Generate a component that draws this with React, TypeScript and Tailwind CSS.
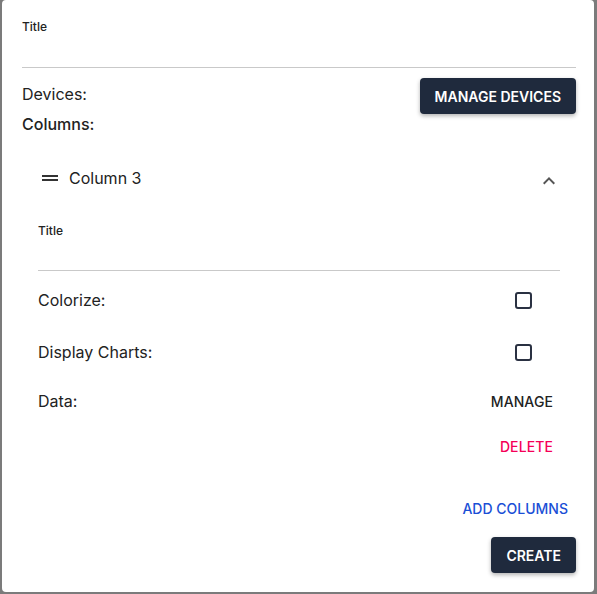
import React from 'react';

const DragHandle = () => (
  <svg width="24" height="24" viewBox="0 0 24 24" className="text-[#333]">
    <path fill="currentColor" d="M20 9H4v2h16V9zM4 15h16v-2H4v2z" />
  </svg>
);

const ChevronUp = () => (
  <svg width="24" height="24" viewBox="0 0 24 24" className="text-[#555]">
    <path fill="currentColor" d="M7.41 15.41 12 10.83l4.59 4.58L18 14l-6-6-6 6z" />
  </svg>
);

const Checkbox = () => (
  <div className="flex h-[24px] w-[24px] items-center justify-center">
    <div className="h-[17px] w-[17px] rounded-[3px] border-2 border-[#2a3142]" />
  </div>
);

export default function App() {
  return (
    <div className="h-[594px] w-[597px] bg-[#7b7b7b] pl-[2px] pr-[3px] pb-[2px] font-['Inter',sans-serif] text-[#222]">
      <div className="flex h-full w-full flex-col rounded-[4px] bg-white pl-[20px] pr-[18px] pt-[19px]">
        {/* Title field */}
        <div className="flex flex-col border-b-[1.5px] border-[#c9c9c9] pb-[32px]">
          <span className="text-[12px] leading-[16px] font-medium">Title</span>
        </div>

        <div className="mt-[10px] flex items-start justify-between">
          <span className="mt-[6px] text-[16px] leading-[20px]">Devices:</span>
          <button className="h-[36px] rounded-[4px] bg-[#1f2a3d] px-[15px] text-[14px] font-semibold text-white shadow-[0_2px_4px_rgba(0,0,0,0.3)]">
            MANAGE DEVICES
          </button>
        </div>
        <span className="text-[16px] leading-[20px] font-medium">Columns:</span>

        {/* Column accordion */}
        <div className="mt-[29px] flex flex-col px-[16px]">
          <div className="flex items-center justify-between">
            <div className="flex items-center gap-[7px]">
              <DragHandle />
              <span className="text-[16px] leading-[24px]">Column 3</span>
            </div>
            <div className="mr-[-1px] mt-[6px]">
              <ChevronUp />
            </div>
          </div>

          <div className="mt-[30px] flex flex-col border-b-[1.5px] border-[#c9c9c9] pb-[31px]">
            <span className="text-[12px] leading-[16px] font-medium">Title</span>
          </div>

          <div className="mt-[17px] flex items-center justify-between pr-[25px]">
            <span className="text-[16px] leading-[24px]">Colorize:</span>
            <Checkbox />
          </div>
          <div className="mt-[28px] flex items-center justify-between pr-[25px]">
            <span className="text-[16px] leading-[24px]">Display Charts:</span>
            <Checkbox />
          </div>
          <div className="mt-[25px] flex items-center justify-between pr-[7px]">
            <span className="text-[16px] leading-[24px]">Data:</span>
            <button className="text-[14px] font-medium tracking-[0.1px] text-[#222]">MANAGE</button>
          </div>
          <div className="mt-[22px] flex justify-end pr-[7px]">
            <button className="text-[14px] leading-[24px] font-medium tracking-[0.1px] text-[#f50057]">DELETE</button>
          </div>
        </div>

        <div className="mt-[38px] flex justify-end pr-[8px]">
          <button className="text-[14px] leading-[24px] font-medium text-[#1a4fd6]">ADD COLUMNS</button>
        </div>
        <div className="mt-[16px] flex justify-end">
          <button className="h-[36px] rounded-[4px] bg-[#1f2a3d] px-[15px] text-[14px] font-semibold text-white shadow-[0_2px_4px_rgba(0,0,0,0.3)]">
            CREATE
          </button>
        </div>
      </div>
    </div>
  );
}
